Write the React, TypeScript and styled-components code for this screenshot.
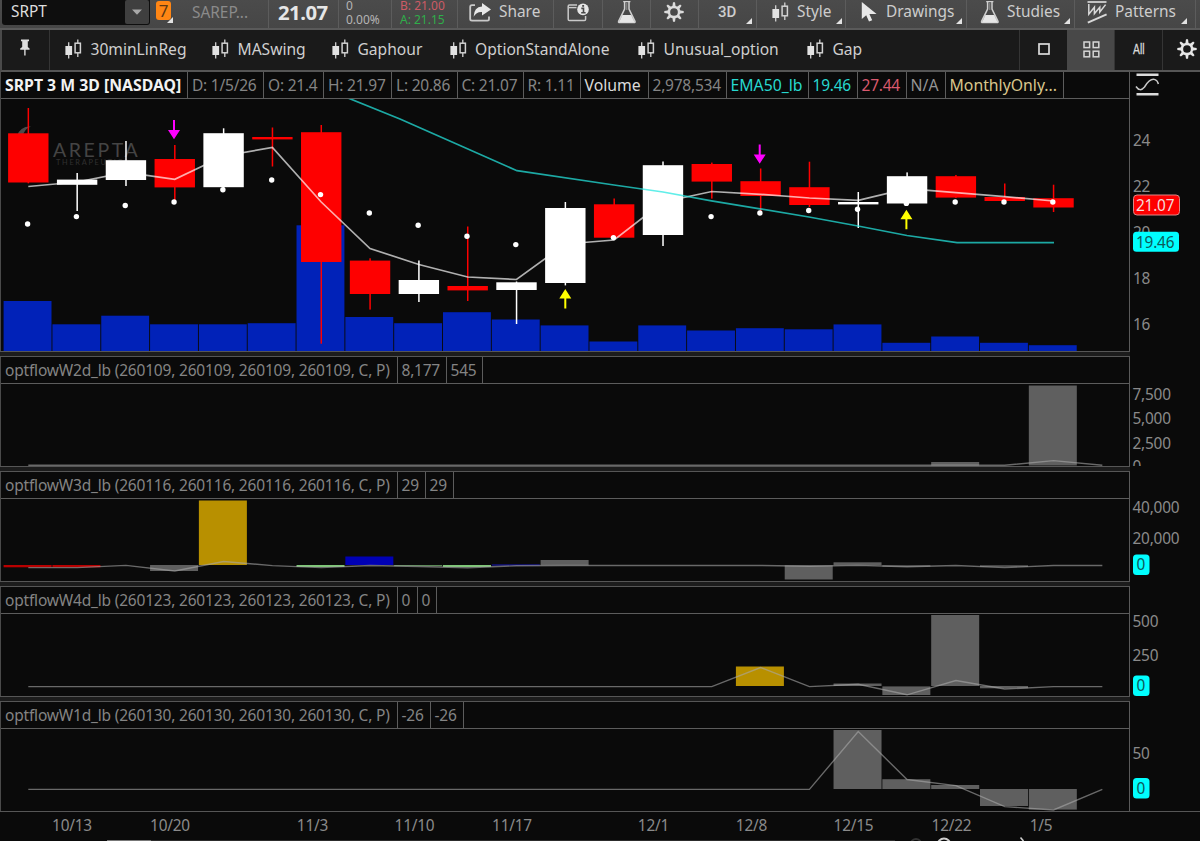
import React from "react";
import styled, { createGlobalStyle, css } from "styled-components";

const GlobalStyle = createGlobalStyle`
  *, *::before, *::after { box-sizing: border-box; }
  body {
    margin: 0;
    background: #0a0a0a;
    font-family: "Noto Sans", "Open Sans", sans-serif;
    overflow: hidden;
  }
  svg { display: block; flex: none; }
`;

const Screen = styled.div`
  width: 1200px;
  height: 841px;
  display: flex;
  flex-direction: column;
  overflow: hidden;
  background: #0a0a0a;
  color: #cfcfcf;
  font-size: 15.2px;
`;

/* ---------- top toolbar ---------- */

const TopBar = styled.header`
  display: flex;
  flex: none;
  height: 30px;
  background: linear-gradient(#4b4b4b, #464646);
  border-bottom: 2px solid #5a5a5a;
`;

const SymbolField = styled.div`
  display: flex;
  justify-content: space-between;
  width: 148px;
  height: 25px;
  margin: 0 1px 0 2px;
  padding: 0 1px 1px 9px;
  border-radius: 0 0 3px 3px;
  background: #0e0e0e;
  color: #dedede;
  font-size: 15.4px;
  line-height: 23px;
`;

const DropButton = styled.span`
  display: flex;
  align-items: center;
  justify-content: center;
  width: 24px;
  height: 24px;
  border-radius: 2px;
  background: #3f3f3f;
`;

const LinkSlot = styled.div`
  position: relative;
  width: 26px;
  padding: 1px 0 0 5px;
`;

const LinkBadge = styled.div`
  width: 15px;
  height: 19px;
  border-radius: 3px;
  background: #ff8614;
  color: #5e3813;
  font-size: 17px;
  line-height: 19px;
  text-align: center;
`;

const Cell = styled.div<{ $w: number; $pad?: number; $gap?: number }>`
  position: relative;
  display: flex;
  align-items: center;
  flex: none;
  width: ${(p) => p.$w}px;
  height: 28px;
  padding: 0 0 4px ${(p) => p.$pad ?? 0}px;
  gap: ${(p) => p.$gap ?? 0}px;
  border-right: 1px solid #5c5c5c;
  white-space: nowrap;
`;

const CornerMark = styled.i<{ $right?: number; $bottom?: number }>`
  position: absolute;
  right: ${(p) => p.$right ?? 4}px;
  bottom: ${(p) => p.$bottom ?? 4}px;
  width: 0;
  height: 0;
  border-left: 6px solid transparent;
  border-bottom: 6px solid #e2e2e2;
`;

const Company = styled.span`
  color: #8b8b8b;
  font-size: 15.4px;
`;

const LastPrice = styled.span`
  color: #e6e6e6;
  font-size: 20.3px;
  line-height: 24px;
  font-weight: 700;
  letter-spacing: -0.5px;
`;

const Stack = styled.div`
  display: flex;
  flex-direction: column;
  height: 26px;
  font-size: 12px;
  line-height: 13.5px;
  color: #b5b5b5;
`;

const Quote = styled.span<{ $c: string }>`
  color: ${(p) => p.$c};
`;

const BarLabel = styled.span<{ $bold?: boolean }>`
  color: #cdcdcd;
  font-size: 15.4px;
  line-height: 24px;
  ${(p) => p.$bold && css`
    font-family: Roboto, sans-serif;
    font-weight: 500;
    font-size: 15px;
  `}
`;

/* ---------- second toolbar ---------- */

const SetBar = styled.nav`
  display: flex;
  flex: none;
  height: 42px;
  background: #1a1a1a;
  border-bottom: 2px solid #555;
  border-left: 2px solid #4a4a4a;
`;

const PinCell = styled.div`
  display: flex;
  align-items: center;
  justify-content: center;
  width: 48px;
  padding: 0 2px 4px 0;
  border-right: 1px solid #353535;
`;

const SetItem = styled.div<{ $w: number }>`
  display: flex;
  align-items: center;
  gap: 8.5px;
  flex: none;
  width: ${(p) => p.$w}px;
  padding-bottom: 2px;
  color: #cfcfcf;
  font-size: 15.6px;
  white-space: nowrap;
`;

const SetList = styled.div`
  display: flex;
  flex: 1;
  padding-left: 15px;
`;

const ViewButton = styled.div<{ $active?: boolean; $w: number; $shift?: number }>`
  display: flex;
  align-items: center;
  justify-content: ${(p) => (p.$shift ? "flex-start" : "center")};
  flex: none;
  width: ${(p) => p.$w}px;
  padding: 0 0 2px ${(p) => p.$shift ?? 0}px;
  border-left: 1px solid ${(p) => (p.$active ? "#484848" : "#353535")};
  background: ${(p) => (p.$active ? "#484848" : "transparent")};
  color: #dcdcdc;
  font-family: "Liberation Sans", sans-serif;
  font-size: 14px;
`;

const Narrow = styled.span`
  transform: scaleX(0.74);
  -webkit-text-stroke: 0.3px #dcdcdc;
`;

/* ---------- chart panels ---------- */

const Panel = styled.section<{ $h: number }>`
  display: flex;
  flex: none;
  height: ${(p) => p.$h}px;
`;

const PlotColumn = styled.div`
  display: flex;
  flex-direction: column;
  width: 1130px;
  border-left: 1px solid #4a4a4a;
  border-right: 1px solid #5a5a5a;
`;

const Legend = styled.div<{ $h: number }>`
  display: flex;
  flex: none;
  height: ${(p) => p.$h}px;
  border-bottom: 1px solid #5c5c5c;
  line-height: ${(p) => p.$h}px;
`;

const LegendCell = styled.span<{ $w: number; $c?: string; $bold?: boolean; $word?: boolean }>`
  flex: none;
  width: ${(p) => p.$w}px;
  height: 26px;
  padding-left: 4px;
  border-right: 1px solid #5c5c5c;
  color: ${(p) => p.$c ?? "#848484"};
  font-size: ${(p) => (p.$word ? 15.8 : 15.5)}px;
  font-weight: ${(p) => (p.$bold ? 700 : 400)};
  letter-spacing: ${(p) => (p.$word ? 0 : -0.22)}px;
  white-space: nowrap;
`;

const StudyName = styled(LegendCell)`
  letter-spacing: -0.19px;
`;

const Divider = styled.div`
  flex: none;
  width: 1130px;
  height: 6px;
  background: #1c1c1c;
  border-top: 1px solid #565656;
  border-bottom: 1px solid #565656;
`;

const AxisText = styled.text`
  font-size: 15.4px;
  letter-spacing: -0.22px;
  fill: #8a8a8a;
`;

const DateAxis = styled.footer`
  flex: none;
  width: 1200px;
  height: 30px;
  border-top: 1px solid #565656;
`;

/* ---------- icons ---------- */

const CandleIcon = () => (
  <svg width="17" height="20" viewBox="0 0 17 20">
    <path d="M3.7 3.2V19.5" stroke="#d2d2d2" strokeWidth="1.3" />
    <rect x="0.4" y="7" width="6.7" height="9" fill="#e2e2e2" />
    <path d="M12.8 0.5V4M12.8 14V18" stroke="#d2d2d2" strokeWidth="1.3" />
    <rect x="10.1" y="4.2" width="5.3" height="9.6" fill="none" stroke="#d2d2d2" strokeWidth="1.5" />
  </svg>
);

const PinIcon = () => (
  <svg width="12" height="18" viewBox="0 0 12 18">
    <path d="M2 0.5H10V2.2H8.8V8L10.6 9.4V10.8H1.2V9.4L3.2 8V2.2H2Z" fill="#dedede" />
    <path d="M5.9 10V16.5" stroke="#dedede" strokeWidth="1.4" />
  </svg>
);

const ShareIcon = () => (
  <svg width="23" height="20" viewBox="0 0 23 20">
    <path d="M6 3.2H3Q1.2 3.2 1.2 5V17Q1.2 18.6 3 18.6H18.4Q20 18.6 20 17V14.5" fill="none" stroke="#c9c9c9" strokeWidth="1.8" />
    <path d="M13 1L22 7.5L13 13.5V10Q7.5 9.5 4.6 14.8Q5 5.2 13 4.6Z" fill="#e8e8e8" />
  </svg>
);

const CalendarIcon = () => (
  <svg width="23" height="19" viewBox="0 0 23 19">
    <path d="M10 2H2.4Q1.2 2 1.2 3.3V16.3Q1.2 17.6 2.4 17.6H17.4Q18.6 17.6 18.6 16.3V13" fill="none" stroke="#c9c9c9" strokeWidth="1.5" />
    <path d="M1.5 4.6H9.5" stroke="#c9c9c9" strokeWidth="1.4" />
    <circle cx="16" cy="6.4" r="5.8" fill="#e6e6e6" />
    <path d="M14.3 5.4H16.5V9.6M14.2 9.8H18.6" fill="none" stroke="#484848" strokeWidth="1.6" />
    <rect x="15.2" y="2" width="1.9" height="1.8" fill="#484848" />
  </svg>
);

const FlaskIcon = () => (
  <svg width="20" height="23" viewBox="0 0 20 23">
    <path d="M6.2 0.6H13.4M7.6 0V8.2L1.6 20.4Q1.2 21.6 2.6 21.6H17Q18.4 21.6 18 20.4L12 8.2V0" fill="none" stroke="#cfcfcf" strokeWidth="1.5" />
    <path d="M5.4 14H14.2L17.8 21.4H1.8Z" fill="#e6e6e6" />
    <path d="M9.8 2V9" stroke="#a8a8a8" strokeWidth="0.8" />
  </svg>
);

const GearIcon = ({ c = "#dcdcdc" }: { c?: string }) => (
  <svg width="20" height="20" viewBox="0 0 20 20">
    <circle cx="10" cy="10" r="5.1" fill="none" stroke={c} strokeWidth="2.5" />
    {[0, 45, 90, 135, 180, 225, 270, 315].map((a) => (
      <path key={a} d="M8.3 5L9 0.3H11L11.7 5Z" fill={c} transform={`rotate(${a} 10 10)`} />
    ))}
  </svg>
);

const CursorIcon = () => (
  <svg width="17" height="21" viewBox="0 0 17 21">
    <path d="M0.8 0V17L5.2 13.2L8 19.6L11.2 18.2L8.4 12H15.6Z" fill="#e8e8e8" />
  </svg>
);

const PatternIcon = () => (
  <svg width="21" height="23" viewBox="0 0 21 23">
    <path d="M0.5 1H19.5" stroke="#d8d8d8" strokeWidth="1.7" />
    <path d="M1.8 3V13.2L7.4 6.2V12.6L12.8 6.2V11L18.6 3.6" fill="none" stroke="#d8d8d8" strokeWidth="1.5" />
    <path d="M0.8 21.6L19.6 13.4" stroke="#d8d8d8" strokeWidth="2.1" />
  </svg>
);

const GridIcon = () => (
  <svg width="17" height="17" viewBox="0 0 17 17" fill="none" stroke="#d6d6d6" strokeWidth="1.5">
    <rect x="1" y="1" width="5.6" height="5.6" />
    <rect x="10.2" y="1" width="5.6" height="5.6" />
    <rect x="1" y="10.2" width="5.6" height="5.6" />
    <rect x="10.2" y="10.2" width="5.6" height="5.6" />
  </svg>
);

/* ---------- data ---------- */

const STEP = 48.82;
const cx = (i: number) => 28.3 + i * STEP;
const bx = (i: number) => 3.6 + i * STEP;

// [up?, body top, body bottom, wick top, wick bottom]
const candles: [boolean, number, number, number, number][] = [
  [false, 133.3, 182.5, 108, 183.3],
  [true, 179.6, 184.8, 173, 211],
  [true, 160.2, 180, 141, 186],
  [false, 159, 187.4, 145, 200],
  [true, 133.2, 187.2, 128.3, 190],
  [false, 137, 139.4, 127.5, 166.5],
  [false, 132.2, 262, 125, 343.7],
  [false, 260.6, 294, 258.3, 309.6],
  [true, 280, 294, 260.5, 302],
  [false, 286, 290.4, 226.5, 301],
  [true, 282.3, 290, 281.5, 324],
  [true, 208, 283, 202, 285.4],
  [false, 204.3, 237.7, 198.5, 238],
  [true, 165.2, 235, 161.5, 246],
  [false, 164, 181.6, 162.6, 198.6],
  [false, 181.2, 196, 168.5, 211],
  [false, 187.2, 205, 161.7, 207],
  [true, 202, 204.4, 192, 228],
  [true, 176.2, 203.5, 172.4, 205],
  [false, 176.2, 197.6, 175, 198],
  [false, 197, 201, 183.5, 202],
  [false, 198.2, 207.5, 184.7, 212],
];

const volumeTops = [
  301, 324.3, 315.7, 324.3, 324.3, 323.2, 225.3, 317, 323.2, 312.2, 319.5, 325.4,
  341.5, 325.4, 330.5, 328.2, 329.3, 324.4, 342.8, 336.5, 342.8, 345.2,
];

const dots: [number, number][] = [
  [0, 224], [1, 216.6], [2, 205.5], [3, 202], [4, 189.8], [5, 180], [6, 194.6], [7, 213],
  [8, 225.2], [9, 236.2], [10, 244.6], [12, 237.6], [14, 216.6], [15, 213], [16, 210.5],
  [17, 209.3], [18, 203.4], [19, 202], [20, 202], [21, 202],
];

const avg = [
  186.5, 182, 172.3, 179.3, 156, 147.5, 202, 248.5, 264.5, 277, 279.5, 244,
  240, 202, 191.5, 194.3, 198, 200.3, 188.6, 192.6, 196.6, 201,
];

const ema: [number, number][] = [
  [348, 98], [400, 119], [460, 145.5], [517, 170.7], [614, 185], [663, 192], [711.5, 200.8],
  [760, 208.8], [809, 217], [858, 226], [907, 235.5], [957, 242.6], [1054, 242.6],
];

type Bar = [number, number, number, string];
interface Study {
  name: string;
  cells: [string, number][];
  bars: Bar[];
  line: number[];
  labels: [string, number][];
  badge?: number;
}

const GRAY = "#5f5f5f";
const GOLD = "#b89000";
const GREEN = "#7fc878";
const flat = (n: number, y: number) => Array<number>(n).fill(y);

// Vertical values are measured from the top edge of each plot area.
const studies: Study[] = [
  {
    name: "optflowW2d_lb (260109, 260109, 260109, 260109, C, P)",
    cells: [["8,177", 49], ["545", 36.5]],
    bars: [[19, 78, 81.5, GRAY], [21, 1.5, 81.5, GRAY]],
    line: [...flat(21, 81.3), 76.6, 81.3],
    labels: [["7,500", 9.5], ["5,000", 34], ["2,500", 58.5], ["0", 82]],
  },
  {
    name: "optflowW3d_lb (260116, 260116, 260116, 260116, C, P)",
    cells: [["29", 28], ["29", 28]],
    bars: [
      [0, 66, 68.3, "#b80000"], [1, 66, 68.3, "#b80000"], [3, 66, 72, GRAY], [4, 1.5, 66, GOLD],
      [6, 66, 68, GREEN], [7, 57.5, 66, "#0000b4"], [8, 66, 67.2, "#5a8a56"], [9, 66, 68, GREEN],
      [10, 65.4, 66.6, "#1414a0"], [11, 61, 66.3, GRAY], [16, 66.3, 80.5, GRAY], [17, 63.3, 66.3, GRAY],
      [18, 66.3, 67.6, GRAY], [20, 66.3, 67.8, GRAY],
    ],
    line: [
      68.6, 68.6, 66.4, 72, 62.5, 66.6, 68.6, 66.5, 67.5, 68.8, 66.8, 66.5, 66.5, 66.5, 66.5, 66.5,
      67.2, 66.4, 67.8, 66.5, 68.6, 66.5, 66.5,
    ],
    labels: [["40,000", 8], ["20,000", 38.5]],
    badge: 65.5,
  },
  {
    name: "optflowW4d_lb (260123, 260123, 260123, 260123, C, P)",
    cells: [["0", 20], ["0", 19]],
    bars: [
      [15, 52.5, 72, GOLD], [17, 69.5, 72, GRAY], [18, 72.4, 81, GRAY], [19, 1, 72, GRAY],
      [20, 72, 74.3, GRAY],
    ],
    line: [...flat(15, 72.6), 53.5, 72.6, 70.3, 80.8, 66.5, 75, 72.6, 72.6],
    labels: [["500", 6.5], ["250", 41]],
    badge: 71.5,
  },
  {
    name: "optflowW1d_lb (260130, 260130, 260130, 260130, C, P)",
    cells: [["-26", 33], ["-26", 33]],
    bars: [
      [17, 1, 60, GRAY], [18, 50.2, 60, GRAY], [19, 56, 60, GRAY], [20, 60, 77, GRAY], [21, 60, 80.6, GRAY],
    ],
    line: [...flat(17, 60.4), 2.5, 50.5, 56.6, 77.6, 81, 60.4],
    labels: [["50", 23.5]],
    badge: 59,
  },
];

const dates: [string, number][] = [
  ["10/13", 72], ["10/20", 170], ["11/3", 312.5], ["11/10", 414.5], ["11/17", 512],
  ["12/1", 653.5], ["12/8", 751.5], ["12/15", 853.5], ["12/22", 951.5], ["1/5", 1041],
];

const pts = (p: [number, number][]) => p.map((q) => q.join(",")).join(" ");

/* ---------- chart parts ---------- */

const PricePlot = () => (
  <svg width="1128" height="252" viewBox="1 99 1128 252">
    <path d="M17 136Q20 126 31 126.5Q24 129 23 136Z" fill="#4b4b4b" />
    <text x="53" y="157" fontFamily="Lato" fontSize="19.5" letterSpacing="2.6" fill="#444">AREPTA</text>
    <text x="56" y="164.6" fontFamily="Lato" fontSize="7.4" letterSpacing="1.7" fill="#303030">THERAPEUTICS</text>
    {volumeTops.map((t, i) => (
      <rect key={i} x={bx(i)} y={t} width={47.9} height={351 - t} fill="#0122b8" />
    ))}
    {candles.map(([up, t, b, hi, lo], i) => {
      const c = up ? "#fff" : "#fe0000";
      return (
        <g key={i} fill={c}>
          <rect x={cx(i) - 0.7} y={hi} width={1.5} height={lo - hi} />
          <rect x={cx(i) - 20.2} y={t} width={40.4} height={b - t} />
        </g>
      );
    })}
    <polyline points={pts(avg.map((y, i) => [cx(i), y]))} fill="none" stroke="#fff" strokeOpacity="0.68" strokeWidth="1.7" />
    <polyline points={pts(ema)} fill="none" stroke="#24e8e0" strokeOpacity="0.72" strokeWidth="1.7" />
    {dots.map(([i, y]) => (
      <circle key={i} cx={cx(i) - 0.7} cy={y} r="2.7" fill="#fff" />
    ))}
    {[[174, 120], [759.7, 144.5]].map(([x, y]) => (
      <path key={x} d={`M${x - 1} ${y}h2v10h5l-6 9.2l-6 -9.2h5z`} fill="#ff00ff" />
    ))}
    {[[565.3, 289], [906.4, 209.7]].map(([x, y]) => (
      <path key={x} d={`M${x} ${y}l6 9.6h-5v10h-2v-10h-5z`} fill="#ffff00" />
    ))}
  </svg>
);

const ZeroBadge = ({ y }: { y: number }) => (
  <g>
    <rect x="3" y={y - 10} width="16.5" height="20.5" rx="3.5" fill="#00ffff" />
    <AxisText x="6.5" y={y + 5.5} style={{ fill: "#0d5a5a" }}>0</AxisText>
  </g>
);

const PriceAxis = () => (
  <svg width="70" height="279" viewBox="0 72 70 279">
    <path d="M6.5 74.7H28.5M6.5 94.2H28.5" stroke="#dcdcdc" strokeWidth="2.6" />
    <path d="M6 86.5Q10 92.5 14.5 87Q20 78 25 79.6Q27.5 80.5 28.4 84" fill="none" stroke="#c8c8c8" strokeWidth="1.5" />
    {[["24", 140], ["22", 185.6], ["20", 231.6], ["18", 277.6], ["16", 323.6]].map(([t, y]) => (
      <AxisText key={t} x="3" y={Number(y) + 6}>{t}</AxisText>
    ))}
    <rect x="3.5" y="195" width="46" height="20" rx="3.5" fill="#fe0000" stroke="#d88" strokeWidth="1" />
    <AxisText x="6" y="210.8" style={{ fill: "#f4dcdc" }}>21.07</AxisText>
    <rect x="3" y="231.8" width="46" height="20" rx="3.5" fill="#00ffff" />
    <AxisText x="6" y="247.5" style={{ fill: "#0d5a5a" }}>19.46</AxisText>
  </svg>
);

const StudyPanel = ({ s }: { s: Study }) => (
  <>
    <Divider />
    <Panel $h={109}>
      <PlotColumn>
        <Legend $h={27}>
          <StudyName $w={396.5}>{s.name}</StudyName>
          {s.cells.map(([t, w], i) => (
            <LegendCell key={i} $w={w}>{t}</LegendCell>
          ))}
        </Legend>
        <svg width="1128" height="82" viewBox="1 0 1128 82">
          {s.bars.map(([i, t, b, c]) => (
            <rect key={i} x={bx(i)} y={t} width={48} height={b - t} fill={c} />
          ))}
          <polyline points={pts(s.line.map((y, i) => [cx(i), y]))} fill="none" stroke="#a8a8a8" strokeOpacity="0.6" strokeWidth="1.4" />
        </svg>
      </PlotColumn>
      <svg width="70" height="109" viewBox="0 -27 70 109">
        {s.labels.map(([t, y]) => (
          <AxisText key={t} x="2.5" y={y + 6}>{t}</AxisText>
        ))}
        {s.badge !== undefined && <ZeroBadge y={s.badge} />}
      </svg>
    </Panel>
  </>
);

const savedSets: [string, number][] = [
  ["30minLinReg", 147], ["MASwing", 120], ["Gaphour", 117.5], ["OptionStandAlone", 188.5],
  ["Unusual_option", 169], ["Gap", 80],
];

interface LegendItem { t: string; w: number; c?: string; bold?: boolean; word?: boolean }

const legend: LegendItem[] = [
  { t: "SRPT 3 M 3D [NASDAQ]", w: 187, c: "#f2f2f2", bold: true, word: true },
  { t: "D: 1/5/26", w: 76 },
  { t: "O: 21.4", w: 60 },
  { t: "H: 21.97", w: 68 },
  { t: "L: 20.86", w: 65.5 },
  { t: "C: 21.07", w: 66 },
  { t: "R: 1.11", w: 57 },
  { t: "Volume", w: 68, c: "#dadada", word: true },
  { t: "2,978,534", w: 78 },
  { t: "EMA50_lb", w: 82, c: "#27d8cf", word: true },
  { t: "19.46", w: 49, c: "#27d8cf" },
  { t: "27.44", w: 49, c: "#d9596e" },
  { t: "N/A", w: 39, c: "#949494", word: true },
  { t: "MonthlyOnly...", w: 118.5, c: "#d8c68c", word: true },
];

export default function App() {
  return (
    <Screen>
      <GlobalStyle />
      <TopBar>
        <SymbolField>
          SRPT
          <DropButton>
            <svg width="10" height="6" viewBox="0 0 10 6"><path d="M0 0.5H10L5 5.8Z" fill="#a8a8a8" /></svg>
          </DropButton>
        </SymbolField>
        <LinkSlot>
          <LinkBadge>7</LinkBadge>
          <CornerMark $right={4} $bottom={5} />
        </LinkSlot>
        <Cell $w={92} $pad={15}><Company>SAREP...</Company></Cell>
        <Cell $w={70} $pad={9}><LastPrice>21.07</LastPrice></Cell>
        <Cell $w={53} $pad={7}><Stack><span>0</span><span>0.00%</span></Stack></Cell>
        <Cell $w={66} $pad={8}>
          <Stack><Quote $c="#cc5b66">B: 21.00</Quote><Quote $c="#2fae4a">A: 21.15</Quote></Stack>
        </Cell>
        <Cell $w={96} $pad={11} $gap={7}><ShareIcon /><BarLabel>Share</BarLabel></Cell>
        <Cell $w={49} $pad={13}><CalendarIcon /></Cell>
        <Cell $w={48} $pad={14}><FlaskIcon /></Cell>
        <Cell $w={48} $pad={13}><GearIcon /></Cell>
        <Cell $w={58} $pad={19}><BarLabel $bold>3D</BarLabel><CornerMark /></Cell>
        <Cell $w={89} $pad={15} $gap={8}><CandleIcon /><BarLabel>Style</BarLabel><CornerMark $right={3} /></Cell>
        <Cell $w={121} $pad={15} $gap={8}><CursorIcon /><BarLabel>Drawings</BarLabel><CornerMark /></Cell>
        <Cell $w={108} $pad={13} $gap={7}><FlaskIcon /><BarLabel>Studies</BarLabel><CornerMark /></Cell>
        <Cell $w={121} $pad={12} $gap={7}><PatternIcon /><BarLabel>Patterns</BarLabel><CornerMark $right={8} /></Cell>
      </TopBar>

      <SetBar>
        <PinCell><PinIcon /></PinCell>
        <SetList>
          {savedSets.map(([name, w]) => (
            <SetItem key={name} $w={w}><CandleIcon />{name}</SetItem>
          ))}
        </SetList>
        <ViewButton $w={48}>
          <svg width="12" height="12"><rect x="1" y="1" width="10" height="10" fill="none" stroke="#dcdcdc" strokeWidth="1.7" /></svg>
        </ViewButton>
        <ViewButton $w={47} $active><GridIcon /></ViewButton>
        <ViewButton $w={48}><Narrow>All</Narrow></ViewButton>
        <ViewButton $w={38} $shift={14}><GearIcon c="#e6e6e6" /></ViewButton>
      </SetBar>

      <Panel $h={279}>
        <PlotColumn>
          <Legend $h={27}>
            {legend.map((l) => (
              <LegendCell key={l.t} $w={l.w} $c={l.c} $bold={l.bold} $word={l.word}>{l.t}</LegendCell>
            ))}
          </Legend>
          <PricePlot />
        </PlotColumn>
        <PriceAxis />
      </Panel>
      {studies.map((s) => (
        <StudyPanel key={s.name} s={s} />
      ))}
      <DateAxis>
        <svg width="1200" height="29" viewBox="0 812 1200 29">
          {dates.map(([t, x]) => (
            <AxisText key={t} x={x} y="830.8" textAnchor="middle">{t}</AxisText>
          ))}
          <path d="M107 840.5H151" stroke="#777" strokeWidth="1" />
          <path d="M151 840.5H895" stroke="#2c2c2c" strokeWidth="1" />
          <circle cx="916" cy="844" r="5" fill="none" stroke="#333" strokeWidth="2" />
          <circle cx="944" cy="845" r="6.5" fill="none" stroke="#cfcfcf" strokeWidth="2" />
          <path d="M1020.5 837.5L1023.5 841" stroke="#cfcfcf" strokeWidth="1.6" />
        </svg>
      </DateAxis>
    </Screen>
  );
}
